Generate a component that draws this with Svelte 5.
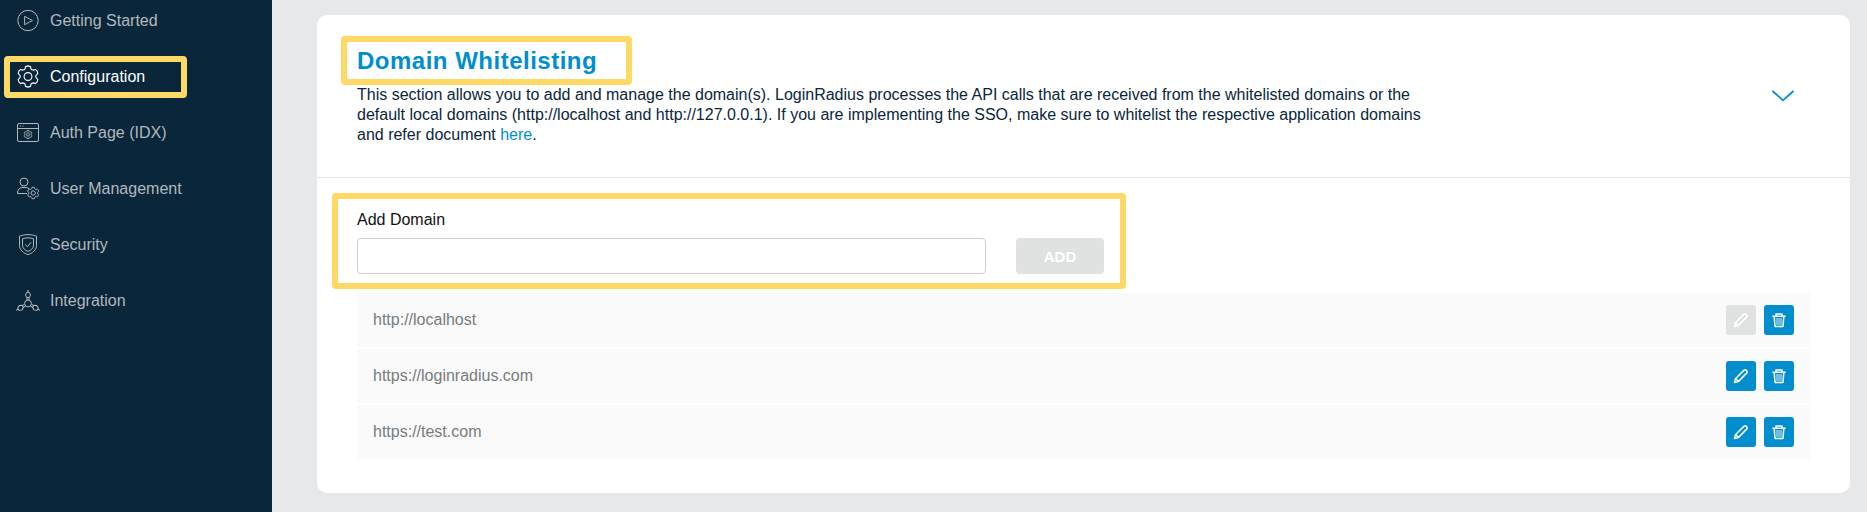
<script>
  const nav = [
    { label: 'Getting Started', icon: 'play' },
    { label: 'Configuration', icon: 'gear', active: true },
    { label: 'Auth Page (IDX)', icon: 'page' },
    { label: 'User Management', icon: 'user' },
    { label: 'Security', icon: 'shield' },
    { label: 'Integration', icon: 'nodes' }
  ];
  const domains = [
    { url: 'http://localhost', locked: true },
    { url: 'https://loginradius.com', locked: false },
    { url: 'https://test.com', locked: false }
  ];
  let value = $state('');

  // Six-toothed gear centred on the origin, one tooth pointing up.
  const polar = (deg, r) => {
    const a = (deg * Math.PI) / 180;
    return `${(r * Math.cos(a)).toFixed(2)},${(r * Math.sin(a)).toFixed(2)}`;
  };
  const gearPoints = [0, 1, 2, 3, 4, 5]
    .flatMap((k) => {
      const a = k * 60 - 90;
      return [polar(a - 14, 10.2), polar(a, 10.6), polar(a + 14, 10.2), polar(a + 20, 8.3), polar(a + 30, 7.8), polar(a + 40, 8.3)];
    })
    .join(' ');
</script>

{#snippet gearShape()}
  <polygon points={gearPoints} stroke-linejoin="round" />
  <circle cx="0" cy="0" r="3.9" />
{/snippet}

<div class="app">
  <nav class="sidebar">
    {#each nav as item}
      <a class="item" class:active={item.active} href="#{item.icon}">
        <svg class="icon" viewBox="0 0 24 24">
          {#if item.icon === 'play'}
            <circle cx="12" cy="12.500" r="10.200" />
            <path d="M8.600 8.300v8.400l7.800-4.200z" stroke-linejoin="round" />
          {:else if item.icon === 'gear'}
            <g transform="translate(12 12.500)">{@render gearShape()}</g>
          {:else if item.icon === 'page'}
            <rect x="1.500" y="3.500" width="21" height="18" rx="1.500" />
            <path d="M1.500 8.500h21M4 6h1M6.500 6h1" />
            <g transform="translate(12 14.500) scale(.4)" stroke-width="2.200">{@render gearShape()}</g>
          {:else if item.icon === 'user'}
            <circle cx="8" cy="6" r="4" />
            <path d="M11 17.500H1.500c0-3.800 1.800-5.600 4.500-6h4c1.300.1 2.300.6 3 1.200" />
            <g transform="translate(17.200 17) scale(.55)" stroke-width="1.800">{@render gearShape()}</g>
          {:else if item.icon === 'shield'}
            <path d="M12 2.600c-3 0-5.800.6-8.500 1.500v9.400c0 4.500 4.200 7.700 8.500 9.200 4.300-1.500 8.500-4.700 8.500-9.200V4.100C17.800 3.200 15 2.600 12 2.600z" />
            <path d="M12 5.800c-2 0-3.800.4-5.500.9v6.500c0 3.200 2.700 5.300 5.500 6.200 2.800-.9 5.500-3 5.500-6.200V6.700c-1.700-.5-3.500-.9-5.500-.9z" />
            <path d="M9.300 12.500l2.200 2.300 3.600-4.600" />
          {:else}
            <circle cx="12" cy="15.500" r="3.400" />
            {#each [0, 120, 240] as turn}
              <path transform="rotate({turn} 12 15.500)" d="M12 2v2.500M10.700 4.300h2.600l1.200 2.700-1.200 2.500h-2.600L9.500 7zM11 9.500v2.500M13 9.500v2.500" />
            {/each}
          {/if}
        </svg>
        <span>{item.label}</span>
        {#if item.active}<i class="mark nav-mark"></i>{/if}
      </a>
    {/each}
  </nav>

  <main>
    <section class="card">
      <header>
        <div class="intro">
          <h1>Domain Whitelisting<i class="mark title-mark"></i></h1>
          <p>
            This section allows you to add and manage the domain(s). LoginRadius processes the API calls that are received from the whitelisted domains or the default local domains (http://localhost and http://127.0.0.1). If you are implementing the SSO, make sure to whitelist the respective application domains and refer document <a href="#docs">here</a>.
          </p>
        </div>
        <svg class="chevron" viewBox="0 0 24 14"><path d="M1.500 2L12 11.300 22.500 2" /></svg>
      </header>

      <div class="body">
        <div class="form">
          <label for="domain">Add Domain</label>
          <div class="controls">
            <input id="domain" type="text" bind:value />
            <button class="add">ADD</button>
          </div>
          <i class="mark form-mark"></i>
        </div>
        <ul>
          {#each domains as d}
            <li>
              <span>{d.url}</span>
              <button class="square" class:locked={d.locked} aria-label="Edit">
                <svg viewBox="0 0 16 16"><path d="M1.400 14.600l1-3.900 8.700-8.600q1-.8 1.900 0l.9.900q.8 1 0 1.900l-8.600 8.700zM2.800 10.800l2.500 2.500" fill="none" stroke="#fff" stroke-width="1.500" stroke-linejoin="round" /></svg>
              </button>
              <button class="square" aria-label="Delete">
                <svg viewBox="0 0 16 16"><path d="M1.300 4.200h13.400M5 4V2h6v2M3.200 4.500l.8 10h8l.8-10" fill="none" stroke="#fff" stroke-width="1.500" stroke-linejoin="round" /><path d="M6 6v7M8 6v7M10 6v7" fill="none" stroke="#fff" stroke-opacity=".85" /></svg>
              </button>
            </li>
          {/each}
        </ul>
      </div>
    </section>
  </main>
</div>

<style>
  :global(body) { margin: 0; overflow: hidden; }
  * { box-sizing: border-box; }
  .app {
    display: flex;
    height: 512px;
    overflow: hidden;
    background: #e7e8ea;
    font: 16px/20px "Liberation Sans", Arial, sans-serif;
  }
  .sidebar { width: 272px; flex: none; background: #0a263b; overflow: hidden; }
  .item {
    position: relative;
    display: flex;
    align-items: center;
    gap: 10px;
    height: 56px;
    padding-left: 16px;
    color: #b3b8bb;
    text-decoration: none;
  }
  .item span { padding-top: 2px; }
  .item:first-child { margin-top: -8px; }
  .active { color: #fff; }
  .icon { width: 24px; height: 24px; fill: none; stroke: currentColor; stroke-width: 1; }
  .active .icon { stroke-width: 1.1; }
  .mark { position: absolute; border: 6px solid #ffd966; border-radius: 4px; pointer-events: none; }
  .nav-mark { left: 4px; top: 8px; width: 183px; height: 42px; }
  main { flex: 1; padding: 15px 17px 19px 45px; }
  .card { height: 478px; background: #fff; border-radius: 10px; }
  header {
    display: flex;
    justify-content: space-between;
    height: 163px;
    padding: 32px 55px 0 40px;
    border-bottom: 1px solid #e4e5e7;
  }
  .intro { width: 1075px; }
  h1 {
    position: relative;
    margin: 0 0 10px;
    font-size: 24px;
    line-height: 28px;
    letter-spacing: 0.5px;
    color: #008ecf;
  }
  .title-mark { left: -16px; top: -11px; width: 291px; height: 49px; }
  p { margin: 0; color: #0a263b; }
  p a { display: inline-block; color: #008ecf; text-decoration: none; }
  .chevron { width: 24px; height: 14px; margin-top: 42px; fill: none; stroke: #008ecf; stroke-width: 1.800; }
  .body { padding: 31px 40px 0; }
  .form { position: relative; height: 84px; }
  label { display: block; height: 29px; padding-top: 1px; color: #111; }
  .controls { display: flex; gap: 30px; }
  input { width: 629px; height: 36px; border: 1px solid #cdced6; border-radius: 4px; outline: none; background: #fff; }
  button { border: 0; padding: 0; font-family: inherit; color: #fff; }
  .add { width: 88px; height: 36px; border-radius: 4px; background: #e0e2e1; font-size: 15px; font-weight: 700; }
  .form-mark { left: -25px; top: -16px; width: 794px; height: 96px; }
  ul { display: grid; gap: 2px; margin: 0; padding: 0; list-style: none; }
  li { display: flex; align-items: center; gap: 8px; height: 54px; padding: 0 16px; background: #fafafa; color: #777c80; }
  li span { flex: 1; }
  .square { display: grid; place-items: center; width: 30px; height: 30px; border-radius: 3px; background: #008ecf; }
  .square svg { width: 16px; height: 16px; }
  .locked { background: #e0e2e1; }
</style>
